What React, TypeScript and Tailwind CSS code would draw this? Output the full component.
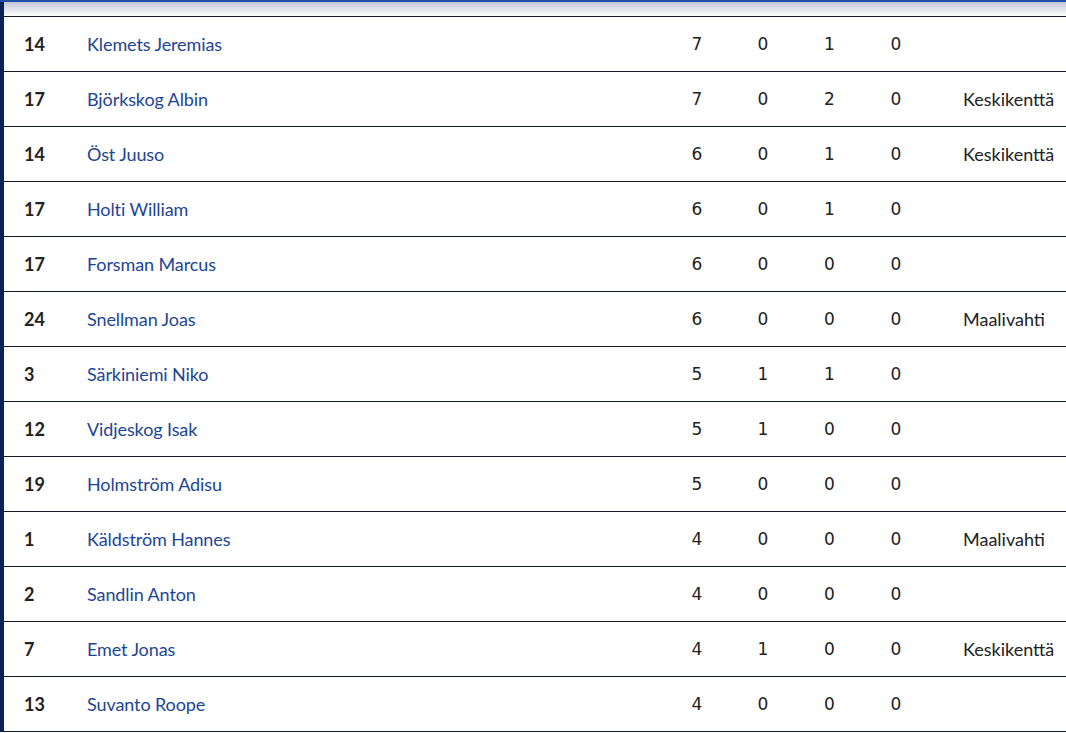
import React from 'react';

type Row = { nr: string; name: string; a: number; b: number; c: number; d: number; pos?: string };

const rows: Row[] = [
  { nr: '14', name: 'Klemets Jeremias', a: 7, b: 0, c: 1, d: 0 },
  { nr: '17', name: 'Björkskog Albin', a: 7, b: 0, c: 2, d: 0, pos: 'Keskikenttä' },
  { nr: '14', name: 'Öst Juuso', a: 6, b: 0, c: 1, d: 0, pos: 'Keskikenttä' },
  { nr: '17', name: 'Holti William', a: 6, b: 0, c: 1, d: 0 },
  { nr: '17', name: 'Forsman Marcus', a: 6, b: 0, c: 0, d: 0 },
  { nr: '24', name: 'Snellman Joas', a: 6, b: 0, c: 0, d: 0, pos: 'Maalivahti' },
  { nr: '3', name: 'Särkiniemi Niko', a: 5, b: 1, c: 1, d: 0 },
  { nr: '12', name: 'Vidjeskog Isak', a: 5, b: 1, c: 0, d: 0 },
  { nr: '19', name: 'Holmström Adisu', a: 5, b: 0, c: 0, d: 0 },
  { nr: '1', name: 'Käldström Hannes', a: 4, b: 0, c: 0, d: 0, pos: 'Maalivahti' },
  { nr: '2', name: 'Sandlin Anton', a: 4, b: 0, c: 0, d: 0 },
  { nr: '7', name: 'Emet Jonas', a: 4, b: 1, c: 0, d: 0, pos: 'Keskikenttä' },
  { nr: '13', name: 'Suvanto Roope', a: 4, b: 0, c: 0, d: 0 },
];

const stat = "flex items-center justify-center pt-px font-['DejaVu_Sans',sans-serif] text-[17px] text-[#222]";

const App: React.FC = () => {
  return (
    <div className="min-h-screen bg-white font-['Lato',sans-serif]">
      <div className="h-[2px] bg-[#2150a8]" />
      <div className="flex">
        <div className="w-1 shrink-0 bg-[#0c2256]" />
        <div className="flex-1">
          {/* shadow under the header bar */}
          <div className="h-[15px] bg-gradient-to-b from-[#c4c6d8] to-white border-b border-[#141a2c]" />
          {rows.map((r, i) => (
            <div
              key={i}
              className="grid grid-cols-[83px_577px_66px_66px_67px_66px_1fr] h-[55px] border-b border-[#141a2c]"
            >
              <div className="flex items-center pl-5 text-[18px] font-bold text-[#222]">{r.nr}</div>
              <div className="flex items-center text-[18px] tracking-[-0.1px] text-[#1d4596]">{r.name}</div>
              <div className={stat}>{r.a}</div>
              <div className={stat}>{r.b}</div>
              <div className={stat}>{r.c}</div>
              <div className={stat}>{r.d}</div>
              <div className="flex items-center pl-[34px] text-[18px] text-[#222]">{r.pos}</div>
            </div>
          ))}
        </div>
      </div>
    </div>
  );
};

export default App;
